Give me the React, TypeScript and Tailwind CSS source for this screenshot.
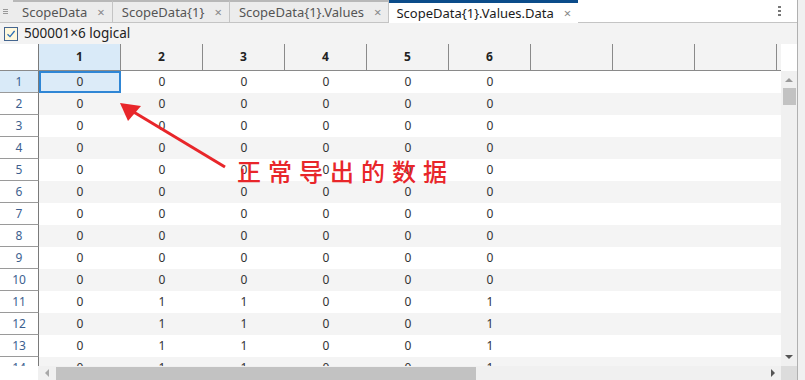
import React from "react";

const tabs = [
  { label: "ScopeData", active: false },
  { label: "ScopeData{1}", active: false },
  { label: "ScopeData{1}.Values", active: false },
  { label: "ScopeData{1}.Values.Data", active: true },
];

const rows = Array.from({ length: 14 }, (_, i) =>
  i >= 10 ? [0, 1, 1, 0, 0, 1] : [0, 0, 0, 0, 0, 0]
);

const colHeads = ["1", "2", "3", "4", "5", "6", "", "", ""];

const Tab = ({ label, active }: { label: string; active: boolean }) => (
  <div
    className={
      active
        ? "h-[23px] flex items-center pl-[7px] pr-[7px] bg-white border-t-[3px] border-[#0b4c8a] text-[#1b1b1b]"
        : "h-[23px] flex items-center pl-[9px] pr-[7px] bg-[#ececec] border-t-2 border-r border-b border-t-[#b8b8b8] border-r-[#c4c4c4] border-b-[#c4c4c4] text-[#555]"
    }
  >
    <span className="text-[13px] leading-none">{label}</span>
    <span className="ml-[10px] text-[13px] leading-none text-[#888]">×</span>
  </div>
);

const Checkbox = () => (
  <svg width="14" height="14" viewBox="0 0 14 14">
    <rect x="0.5" y="0.5" width="13" height="13" fill="#fff8dc" stroke="#44658f" />
    <path d="M3.5 7.2 L6 9.6 L10.6 4" fill="none" stroke="#2a6fb8" strokeWidth="1.3" />
  </svg>
);

export default function App() {
  return (
    <div className="relative w-[805px] h-[380px] overflow-hidden bg-[#f0f0f0] font-['Noto_Sans','Open_Sans',sans-serif]">
      <div className="w-[798px] h-[380px] flex flex-col bg-white border-r border-[#b0b0b0]">
        {/* tab strip */}
        <div className="h-[23px] flex items-stretch bg-white">
          <div className="w-[13px] flex flex-col justify-center items-start pl-[3px] gap-[1px] bg-[#ececec] border-b border-[#c4c4c4]">
            <div className="w-[5px] h-px bg-[#999]" />
            <div className="w-[5px] h-px bg-[#999]" />
            <div className="w-[5px] h-px bg-[#999]" />
          </div>
          {tabs.map((t) => (
            <Tab key={t.label} label={t.label} active={t.active} />
          ))}
          <div className="flex-1 flex items-center justify-end pr-[16px] border-b border-[#c4c4c4]">
            <div className="flex flex-col gap-[2px]">
              <div className="w-[3px] h-[2px] bg-[#777]" />
              <div className="w-[3px] h-[2px] bg-[#777]" />
              <div className="w-[3px] h-[2px] bg-[#777]" />
            </div>
          </div>
        </div>

        {/* info bar */}
        <div className="h-[21px] flex items-center gap-[6px] pl-[4px] bg-[#f3f3f3]">
          <Checkbox />
          <span className="text-[13.5px] text-[#222] leading-none">500001×6 logical</span>
        </div>

        {/* grid */}
        <div className="flex-1 flex flex-col min-h-0">
          <div className="flex-1 flex min-h-0">
            <div className="w-[781px] flex flex-col overflow-hidden">
              {/* header */}
              <div className="h-[27px] flex shrink-0 border-b border-[#8a8a8a] bg-[#f3f3f3]">
                <div className="w-[39px] shrink-0 bg-white border-r border-[#7a7a7a]" />
                {colHeads.map((h, i) => (
                  <div
                    key={i}
                    className={`w-[82px] shrink-0 flex items-center justify-center border-r border-[#8a8a8a] text-[12px] font-bold text-[#222] ${
                      i === 0 ? "bg-[#d9eaf8]" : ""
                    }`}
                  >
                    {h}
                  </div>
                ))}
              </div>
              {/* body */}
              <div className="flex-1 overflow-hidden">
                {rows.map((r, ri) => (
                  <div key={ri} className={`h-[22px] flex ${ri % 2 === 1 ? "bg-[#f4f4f4]" : "bg-white"}`}>
                    <div
                      className={`w-[39px] shrink-0 flex items-center justify-center border-r border-b border-r-[#7a7a7a] border-b-[#9a9a9a] text-[12px] text-[#3d5f8f] ${
                        ri === 0 ? "bg-[#d9eaf8]" : "bg-white"
                      }`}
                    >
                      {ri + 1}
                    </div>
                    {r.map((v, ci) => (
                      <div
                        key={ci}
                        className={`w-[82px] shrink-0 flex items-center justify-center text-[12px] text-[#333] ${
                          ri === 0 && ci === 0 ? "bg-[#dcebf8] border-2 border-[#2f86d5]" : ""
                        }`}
                      >
                        {v}
                      </div>
                    ))}
                  </div>
                ))}
              </div>
            </div>
            {/* vertical scrollbar */}
            <div className="w-[16px] flex flex-col">
              <div className="h-[27px] bg-white" />
              <div className="flex-1 flex flex-col items-center bg-[#f0f0f0]">
                <div className="mt-[7px] w-0 h-0 border-l-[4px] border-r-[4px] border-b-[4px] border-l-transparent border-r-transparent border-b-[#9a9a9a]" />
                <div className="mt-[6px] w-[13px] h-[17px] bg-[#c2c2c2]" />
                <div className="flex-1" />
                <div className="mb-[7px] w-0 h-0 border-l-[4px] border-r-[4px] border-t-[4px] border-l-transparent border-r-transparent border-t-[#555]" />
              </div>
            </div>
          </div>
          {/* horizontal scrollbar */}
          <div className="h-[14px] flex shrink-0">
            <div className="w-[38px] bg-white" />
            <div className="w-[743px] flex items-center bg-[#f0f0f0]">
              <div className="ml-[7px] w-0 h-0 border-t-[4px] border-b-[4px] border-r-[4px] border-t-transparent border-b-transparent border-r-[#a8a8a8]" />
              <div className="ml-[7px] w-[420px] h-[13px] bg-[#c2c2c2]" />
              <div className="flex-1" />
              <div className="mr-[6px] w-0 h-0 border-t-[4px] border-b-[4px] border-l-[4px] border-t-transparent border-b-transparent border-l-[#555]" />
            </div>
            <div className="w-[16px] bg-[#dcdcdc]" />
          </div>
        </div>
      </div>

      {/* annotation */}
      <svg className="absolute left-0 top-0 pointer-events-none" width="805" height="380">
        <line x1="225" y1="167" x2="132" y2="111" stroke="#e8262a" strokeWidth="3" />
        <polygon points="120,103 141,106 128,121" fill="#e8262a" />
      </svg>
      <div className="absolute left-[237px] top-[159px] text-[24px] leading-none tracking-[7px] font-medium text-[#e8262a] font-['Noto_Sans_CJK_SC',sans-serif]">
        正常导出的数据
      </div>
    </div>
  );
}
